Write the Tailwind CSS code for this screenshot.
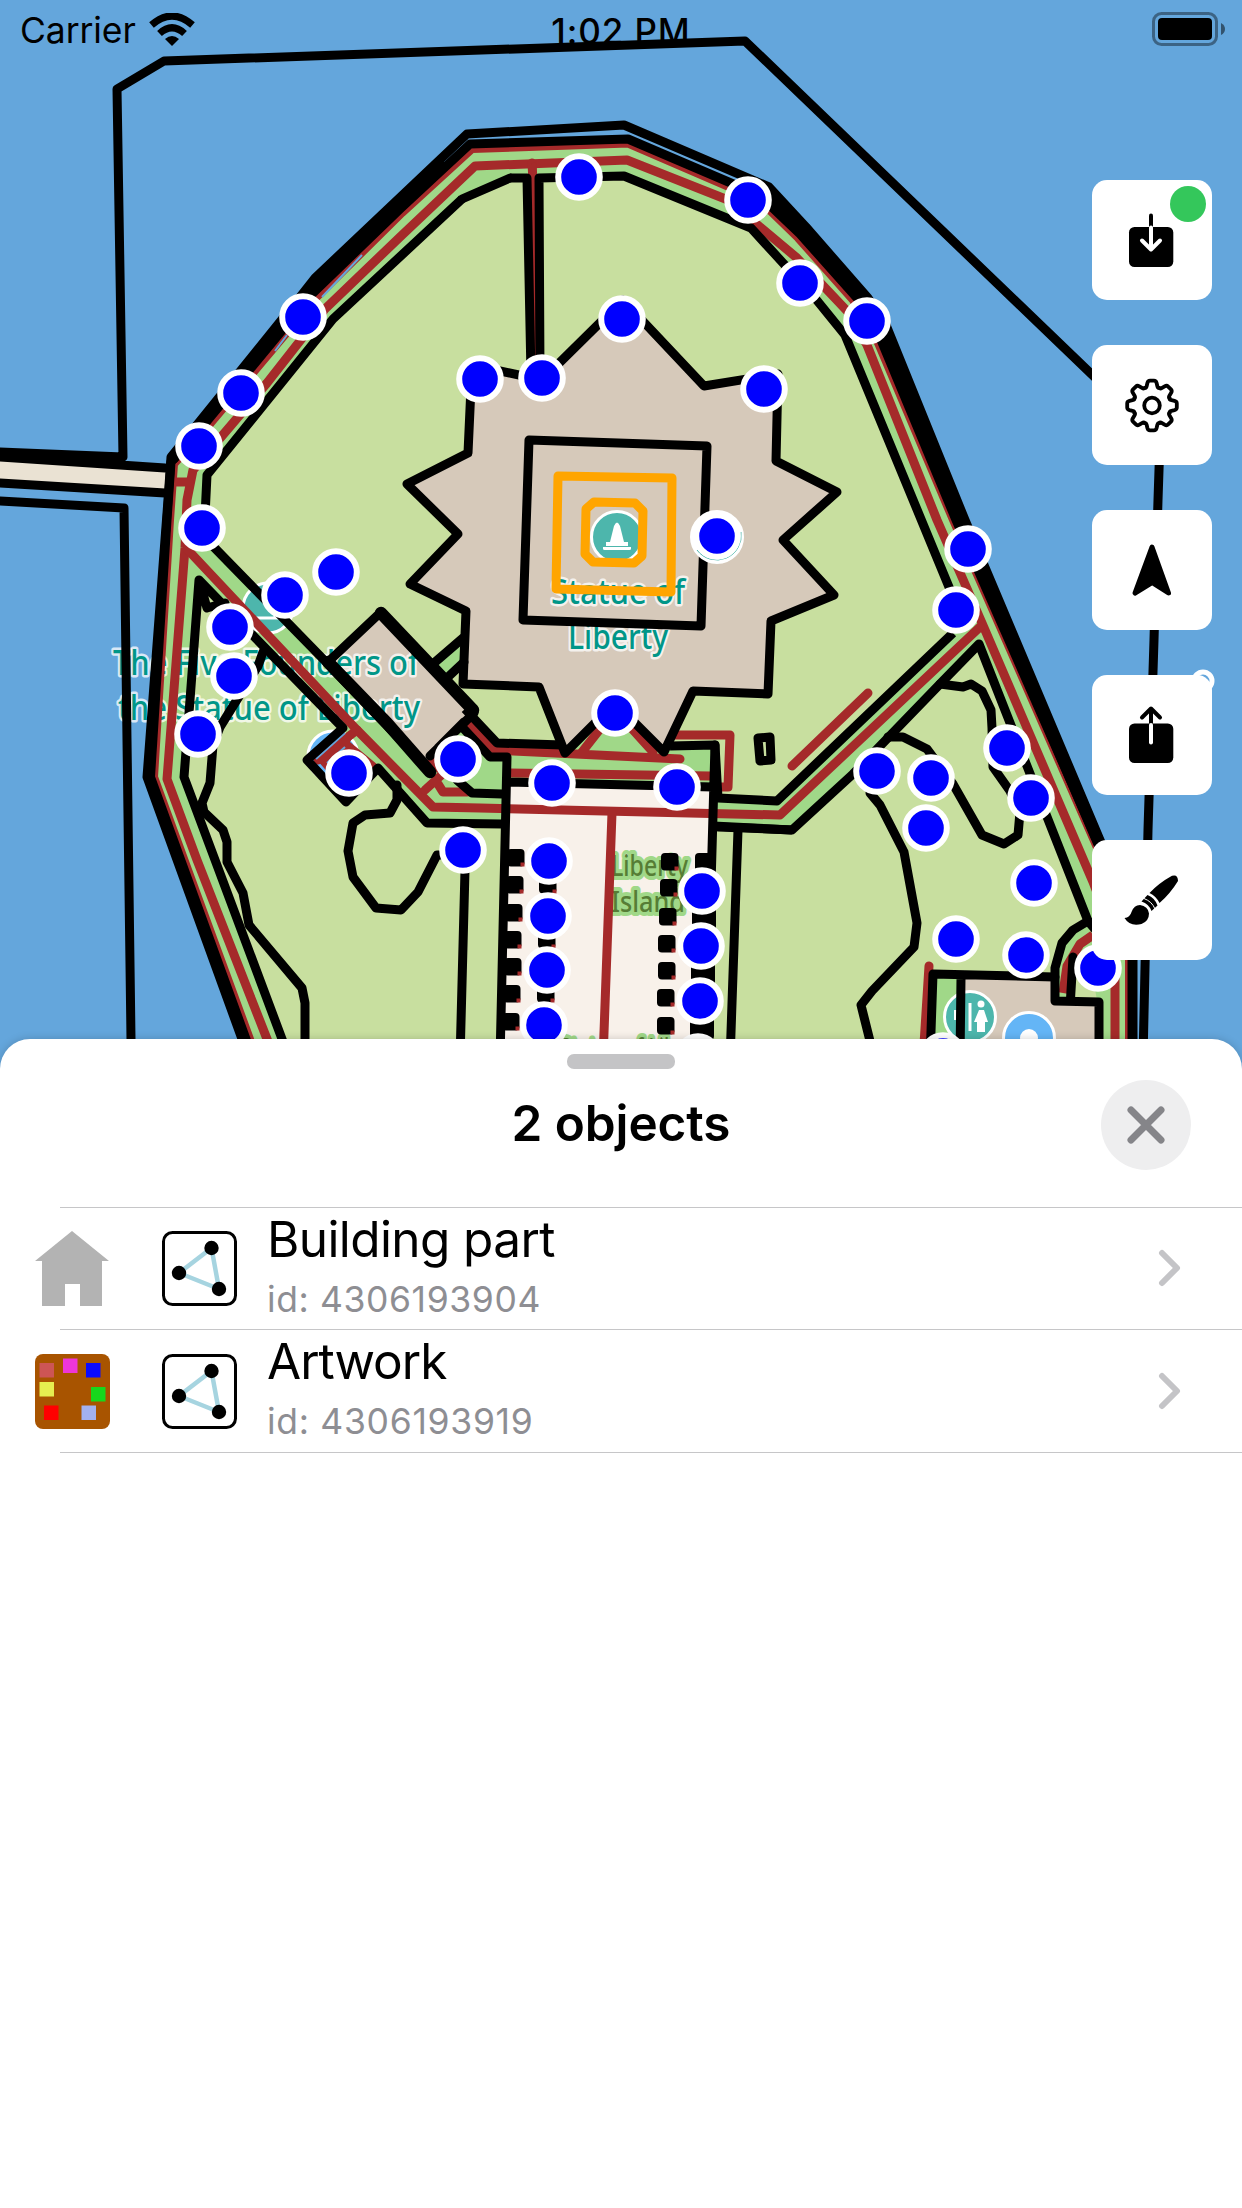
<!DOCTYPE html>
<html lang="en">
<head>
<meta charset="utf-8">
<title>Map</title>
<script src="https://cdn.jsdelivr.net/npm/@tailwindcss/browser@4"></script>
</head>
<body class="bg-white">
<main class="relative flex h-[2208px] w-[1242px] flex-col overflow-hidden bg-white font-['Inter',sans-serif] text-black">
  <section class="relative h-[1039px] w-full shrink-0">
    <!-- map canvas -->
    <svg class="absolute left-0 top-0" width="1242" height="1090" viewBox="0 0 1242 1090" fill="none" stroke-linejoin="round">
      <rect width="1242" height="1090" fill="#64a6dc"/>
      <!-- pier -->
      <path d="M0 457L170 468V493L0 483Z" fill="#eae2d3"/>
      <!-- island base (paths) -->
      <path d="M470 144L628 139L760 196L800 234L857 298L882 340L956 520L1100 850L1133 930V1090H263L245 1039L150 777L167 520L171 462L208 420L313 293L400 209Z" fill="#a0d888"/>
      <!-- lawns -->
      <g fill="#c8df9f">
        <path d="M510 178H527L532 378L540 362L539 178L624 176L751 228L815 298L845 335L956 604L953 633L777 801L718 798L715 745L500 743L465 708L433 774L327 663L204 537L207 475L333 319L462 199Z"/>
        <path d="M199 580L345 728L307 760L346 804L378 768L427 823L502 824L498 1090H301L282 1039L184 777L190 700Z"/>
        <path d="M979 644L1088 921L1073 930L1062 943L1055 968V1001L1099 1002V1090H722L730 1039L738 828L792 830L853 774L940 684Z"/>
      </g>
      <path d="M713 828L738 828L730 1090H706Z" fill="#c8df9f"/>
      <path d="M713 826L792 830M738 830L729 1090" stroke="#000" stroke-width="9"/>
      <path d="M1073 957L1090 962L1097 1000H1069Z" fill="#c8df9f"/>
      <path d="M567 752L615 705L665 752Z" fill="#a0d888"/>
      <path d="M500 746H713V786H507V790H470L440 775L465 722Z" fill="#a0d888"/>
      <path d="M435 663L462 641V660L447 677Z" fill="#a0d888"/>
      <!-- cafe building and annex -->
      <path d="M965 976H1053V1001H1099V1090H965Z" fill="#d6c9ba"/>
      <path d="M933 975H961V1090H930Z" fill="#a0d888"/>
      <!-- points of interest below the ways -->
      <g stroke="#fff" stroke-width="3">
        <circle cx="268" cy="608" r="25" fill="#4db6ac"/>
        <circle cx="333" cy="756" r="25" fill="#64b5f6"/>
        <circle cx="970" cy="1017" r="25.5" fill="#4db6ac"/>
        <circle cx="1029" cy="1038" r="25.5" fill="#64b5f6"/>
      </g>
      <path d="M256 618H284M275 612V618" stroke="#fff" stroke-width="3"/>
      <circle cx="1029" cy="1038" r="9" fill="#fff"/>
      <path d="M970 1003V1031" stroke="#fff" stroke-width="3"/>
      <circle cx="981" cy="1004" r="3.5" fill="#fff"/>
      <path d="M979 1010H984L988 1022H985V1032H977V1022H974ZM954 1010H960V1020H954Z" fill="#fff"/>
      <!-- promenade paving -->
      <path d="M507 782L713 787L707 1090H500Z" fill="#f8f1ea"/>
      <!-- fort and museum -->
      <path d="M468 453L407 484L458 534L410 584L466 611L463 684L539 687L565 753L615 703L664 752L693 691L768 694L771 621L834 595L783 540L837 492L776 461L778 374L704 386L623 300L542 380L472 365Z" fill="#d6c9ba"/>
      <path d="M381 613L329 663L428 765L474 711Z" fill="#d6c9ba"/>
      <circle cx="617" cy="537" r="25.5" fill="#4db6ac" stroke="#fff" stroke-width="3"/>
      <path d="M603 546H628V542H624L620 526Q617 519 614 526L610 542H606V546ZM603 547H631V549H603Z" fill="#fff"/>
      <path d="M604.500 548.500H629.500" stroke="#fff" stroke-width="3" stroke-linecap="round"/>
      <!-- map labels -->
      <g font-family="'Noto Sans','Open Sans',sans-serif" font-weight="500" stroke-linejoin="round" style="paint-order:stroke">
        <g fill="#009688" stroke="#fff" stroke-opacity=".75" stroke-width="5" font-size="35">
          <text x="551" y="604" textLength="134" lengthAdjust="spacingAndGlyphs">Statue of</text>
          <text x="568" y="649" textLength="100" lengthAdjust="spacingAndGlyphs">Liberty</text>
          <text x="113" y="675" textLength="306" lengthAdjust="spacingAndGlyphs">The Five Founders of</text>
          <text x="118" y="720" textLength="302" lengthAdjust="spacingAndGlyphs">the Statue of Liberty</text>
        </g>
        <g fill="#567d35" stroke="#a0d888" stroke-width="8" font-size="29">
          <text x="611" y="875.500" textLength="77" lengthAdjust="spacingAndGlyphs">Liberty</text>
          <text x="611" y="912" textLength="74" lengthAdjust="spacingAndGlyphs">Island</text>
          <text x="560" y="1059" textLength="116" lengthAdjust="spacingAndGlyphs">Statue of Lib</text>
        </g>
      </g>
      <!-- brown footpaths -->
      <g stroke="#a52a2a" stroke-width="9" stroke-linecap="round">
        <path d="M472 149L628 143.500L759 200L798 238L853 300L878 343L953 520L1098 850L1129 930V1090H268L250 1039L154 777L170 520L174 464L211 423L317 297L402 213Z" stroke-width="8"/>
        <path d="M475 166L627 160L728 200L797 258L848 312L867 345L937 520L982 623L1093 882L1115 940V1090M475 166L400 237L325 309L267 383L193 470L187 500L185 548L167 779L197 860L267 1039L286 1090"/>
        <path d="M177 482H189M532 163L534 200M187 549L357 730L433 807L480 808L780 815L980 627M868 693L792 766M929 966L923 1060"/>
        <path d="M534 165L534 365" stroke-width="5"/>
        <path d="M612 813L603 1060M468 723L495 750L680 759M510 773L710 776M673 735H730L728 787H716M582 752L615 710L653 752"/>
        <path d="M425 790L447 770M438 784L443 792L467 792M432 760L438 768M357 730L318 760"/>
        <path d="M1093 935L1080 944L1067 966L1063 993" stroke-linecap="butt"/>
        <path d="M357 728L316 759L346 793L378 765L350 742Z" fill="#a52a2a" stroke="none"/>
      </g>
      <path d="M362 255L322 297M287 335L275 351M345 733L316 759M345 747L327 763" stroke="#64a6dc" stroke-width="2"/>
      <!-- black outlines -->
      <g stroke="#000" stroke-width="9" stroke-linecap="round">
        <path d="M0 452L123 457L117 89L164 61L745 41L1160 440L1158 500L1154 640L1148 830L1143 1060M0 457L165 468M0 483L165 493M0 501L124 508L127 740L131 1039V1060"/>
        <path d="M467 134L624 125L769 187L806 227L868 298L886 325L965 520L1100 840L1133 918V1090H262L242 1039L147 777L168 500L171 457L300 297L315 278Z"/>
        <path d="M470 144L628 139L759 195L800 234L857 298L881 340L956 520L1101 850L1132 930V1090H265L246 1039L150.500 777L167 520L171 462L208 420L313 293L400 209Z"/>
        <path d="M772 199L803 231L862 297L883 332L960.500 520L1099 843M440 166L400 204L313 286L254 359L173 458" stroke-width="12"/>
        <path d="M510 178H527L531 375H540L539 178L624 176L751 228L815 298L845 335L956 604M953 633L777 801L718 798L715 745L670 746M563 745L497 743L465 709M433 774L327 663L204 537L207 475L333 319L462 199" stroke-linecap="butt"/>
        <path d="M510 178L462 199"/>
        <path d="M199 580L343 728L307 760L346 802L378 768L427 823L502 824M301 1090L282 1039L184 777L190 700L199 580L207 608L225 603"/>
        <path d="M979 644L1088 921L1073 930L1062 943L1055 968V1001L1099 1002V1090M979 644L940 684L853 774L792 830L718 827"/>
        <path d="M1088 921L1100 935M1073 957L1070.500 999"/>
        <path d="M940 684L963 687L971 684L982 691L991 710L992 728L993 767L1010 791L1020 812L1018 835L1004 844L982 835L953 784L927 749L903 737L888 737"/>
        <path d="M870 793L880 805L904 852L917 923L914 947L872 991L861 1005L871 1045"/>
        <path d="M263 652L258 666L220 727L213 745L210 783L202 803L204 812L223 830L227 842V862L243 893L249 925L302 988L305 1003V1050"/>
        <path d="M397 785V800L390 813L365 815L353 823L348 851L353 877L376 908L401 910L418 892L437 855H450M465 870L460 1060"/>
        <path d="M434 663L463 638M448 677L464 662M463 728L490 757H507L500 1060M457 780L472 793L502 794M507 782L713 787M715 745L706 1060"/>
        <path d="M468 453L407 484L458 534L410 584L466 611L463 684L539 687L565 753L615 703L664 752L693 691L768 694L771 621L834 595L783 540L837 492L776 461L778 374L704 386L623 300L542 380L472 365Z"/>
        <path d="M529 440L707 446L701 626L523 620Z"/>
        <path d="M381 612L328 662"/>
        <path d="M474 713L430 756M464 722L438 748"/>
        <path d="M328 662L387 723L430 772M381 613L473 710" stroke-width="12.500"/>
        <path d="M758 738L770 737L771 760L760 761Z"/>
        <path d="M930 1060L933 974L1055 977M961 978L960 1060"/>
      </g>
      <!-- benches along the promenade, drawn from the lists below -->
      <g id="benches"></g>
      <path d="M558 476L672 478L671 592L556 589ZM594 502L635 503L643 511L642 556L634 563L593 562L585 554L586 509Z" stroke="#ffa500" stroke-width="9"/>
      <circle cx="717" cy="537" r="25.500" fill="#fff" stroke="#fff" stroke-width="3"/>
      <path d="M697 550A24.500 24.500 0 0 0 741 532" stroke="#4db6ac" stroke-width="1"/>
      <circle cx="1203" cy="681" r="9" stroke="#fff" stroke-width="5"/>
      <g id="nodes" fill="#0000ff" stroke="#fff" stroke-width="6"></g>
    </svg>

    <header class="absolute inset-x-0 top-0 h-[58px]">
      <div class="grid h-full grid-cols-3 items-center pl-5 pr-4">
        <div class="flex items-center gap-[13px]">
          <span class="w-[116px] whitespace-nowrap pt-[3px] text-[35.500px] leading-[56px] tracking-[-0.100px]">Carrier</span>
          <svg width="46" height="34" viewBox="0 0 46 34" fill="none" stroke="#000"><path d="M2.500 12Q23-6 43.500 12M10.500 20.500Q23 9 35.500 20.500" stroke-width="7"/><path d="M16 26Q23 20 30 26L23 33Z" fill="#000" stroke="none"/></svg>
        </div>
        <div class="pr-1 pt-[3px] text-center text-[35px] font-medium leading-[56px] tracking-[0.900px]">1:02 PM</div>
        <svg class="justify-self-end" width="74" height="35" viewBox="0 0 74 35"><rect x="1.500" y="1.500" width="63" height="31" rx="8" fill="none" stroke="#000" stroke-opacity=".4" stroke-width="3"/><rect x="6" y="6" width="54" height="22" rx="4" fill="#000"/><path d="M69 11Q73 13 73 17T69 23Z" fill="#000" fill-opacity=".5"/></svg>
      </div>
    </header>

    <nav class="absolute left-[1092px] top-[180px] flex flex-col gap-[45px]">
      <button class="relative size-[120px] rounded-[15px] bg-white">
        <svg width="120" height="120" viewBox="0 0 120 120" fill="none" stroke-width="4" stroke-linecap="round" stroke-linejoin="round"><path d="M59 35.500V50" stroke="#000"/><rect x="37" y="47" width="44.300" height="40" rx="5.500" fill="#000"/><path d="M59 47.500V69M50 60.500L59 69.500L68 60.500" stroke="#fff"/></svg>
        <span class="absolute right-[6px] top-[6px] size-9 rounded-full bg-[#34c75b]"></span>
      </button>
      <button class="size-[120px] rounded-[15px] bg-white">
        <svg width="120" height="120" viewBox="-60 -60.500 120 120" fill="none" stroke="#000" stroke-width="3.800" stroke-linecap="round" stroke-linejoin="round">
          <circle r="7.800"/>
          <path id="tooth" d="M-7.300-17.600Q-5.800-17.400-5.300-19.500L-4.600-22.500Q-4-24.800-2-24.800H2Q4-24.800 4.600-22.500L5.300-19.500Q5.800-17.400 7.300-17.600"/>
          <use href="#tooth" transform="rotate(45)"/><use href="#tooth" transform="rotate(90)"/><use href="#tooth" transform="rotate(135)"/><use href="#tooth" transform="rotate(180)"/><use href="#tooth" transform="rotate(225)"/><use href="#tooth" transform="rotate(270)"/><use href="#tooth" transform="rotate(315)"/>
        </svg>
      </button>
      <button class="size-[120px] rounded-[15px] bg-white">
        <svg width="120" height="120" viewBox="0 0 120 120"><path d="M60 37L76.500 83L60 72.500L43 83Z" stroke="#000" stroke-width="5" stroke-linejoin="round"/></svg>
      </button>
      <button class="size-[120px] rounded-[15px] bg-white">
        <svg width="120" height="120" viewBox="0 0 120 120" fill="none" stroke-width="4" stroke-linecap="round" stroke-linejoin="round"><rect x="37" y="48.500" width="44.300" height="39.500" rx="5.500" fill="#000"/><path d="M59 48V34M50 42.500L59 33.500L68 42.500" stroke="#000"/><path d="M59 50V67.500" stroke="#fff"/></svg>
      </button>
      <button class="size-[120px] rounded-[15px] bg-white">
        <svg width="120" height="120" viewBox="0 0 120 120"><path d="M57.500 53Q67 43 80 35.800Q86 34 86 41Q78 54 67.500 63Q64 56 57.500 53ZM55.500 55Q63 58 65.500 65.500L59.500 71Q57 64 49.500 61.500ZM48 65Q56 66 57 73.500Q57 81 49.500 84Q38 87 32.500 78Q38 77.500 39.500 72Q42 65 48 65Z"/><path d="M52 58.500Q60 61.500 63 69" fill="none" stroke="#fff" stroke-width="1"/></svg>
      </button>
    </nav>
  </section>

  <section class="relative flex flex-1 flex-col rounded-t-[30px] bg-white shadow-[0_0_8px_rgba(0,0,0,0.18)]">
    <div class="mx-auto mt-[15px] h-[15px] w-[108px] rounded-[7px] bg-[#c4c4c6]"></div>
    <div class="mt-[11px] grid h-[90px] grid-cols-[1fr_auto_1fr] items-center pl-[51px] pr-[51px]">
      <span></span>
      <h1 class="pb-[5px] text-[49.500px] font-semibold leading-[60px] tracking-[-0.100px]">2 objects</h1>
      <button class="flex size-[90px] items-center justify-center justify-self-end rounded-full bg-[#eeeeef]">
        <svg width="40" height="40" viewBox="0 0 40 40" stroke="#858589" stroke-width="7" stroke-linecap="round"><path d="M5 5L35 35M35 5L5 35"/></svg>
      </button>
    </div>
    <div class="ml-[60px] mt-[37px] h-px bg-[#c6c6c8]"></div>
    <ul>
      <li>
        <div class="flex h-[121px] items-center pl-[35px] pr-[60px]">
          <svg width="75" height="76" viewBox="0 0 75 76"><path d="M37 0L74 30H67V75H45V53H30V75H7V30H0Z" fill="#b3b3b3"/></svg>
          <svg class="ml-[52px]" width="75" height="75" viewBox="0 0 75 75"><rect x="1.500" y="1.500" width="72" height="72" rx="9" fill="#fff" stroke="#000" stroke-width="3"/><path d="M49.500 17L17 42L57 58Z" fill="none" stroke="#a6d4e0" stroke-width="4.500"/><circle cx="49.500" cy="17" r="7.200"/><circle cx="17" cy="42" r="7.200"/><circle cx="57" cy="58" r="7.200"/></svg>
          <div class="-mt-[4px] ml-[30px] flex-1">
            <p class="text-[49.500px] leading-[60px] tracking-[-0.600px]">Building part</p>
            <p class="mt-[6px] text-[35.500px] leading-[50px] tracking-[0.600px] text-[#8e8e93]">id: 4306193904</p>
          </div>
          <svg class="-mt-[2px]" width="24" height="40" viewBox="0 0 24 40" fill="none" stroke="#c4c4c7" stroke-width="6" stroke-linecap="round" stroke-linejoin="round"><path d="M4 5L19 20L4 35"/></svg>
        </div>
        <div class="ml-[60px] h-px bg-[#c6c6c8]"></div>
      </li>
      <li>
        <div class="flex h-[122px] items-center pl-[35px] pr-[60px]">
          <svg width="75" height="75" viewBox="0 0 75 75"><rect width="75" height="75" rx="8" fill="#a85400"/><path d="M4.500 9H19v14.500H4.500Z" fill="#cd5555"/><path d="M28 4.500h14.500V19H28Z" fill="#ee36d8"/><path d="M51 9h14.500v14.500H51Z" fill="#0a0aff"/><path d="M4.500 28H19v14.500H4.500Z" fill="#e6ee50"/><path d="M56 33h14.500v14.500H56Z" fill="#16d81c"/><path d="M9 51.500h14.500V66H9Z" fill="#f00"/><path d="M46.500 51.500H61V66H46.500Z" fill="#a3b1ef"/></svg>
          <svg class="ml-[52px]" width="75" height="75" viewBox="0 0 75 75"><rect x="1.500" y="1.500" width="72" height="72" rx="9" fill="#fff" stroke="#000" stroke-width="3"/><path d="M49.500 17L17 42L57 58Z" fill="none" stroke="#a6d4e0" stroke-width="4.500"/><circle cx="49.500" cy="17" r="7.200"/><circle cx="17" cy="42" r="7.200"/><circle cx="57" cy="58" r="7.200"/></svg>
          <div class="-mt-[4px] ml-[30px] flex-1">
            <p class="text-[49.500px] leading-[60px] tracking-[-1px]">Artwork</p>
            <p class="mt-[6px] text-[35.500px] leading-[50px] tracking-[0.700px] text-[#8e8e93]">id: 4306193919</p>
          </div>
          <svg width="24" height="40" viewBox="0 0 24 40" fill="none" stroke="#c4c4c7" stroke-width="6" stroke-linecap="round" stroke-linejoin="round"><path d="M4 5L19 20L4 35"/></svg>
        </div>
        <div class="ml-[60px] h-px bg-[#c6c6c8]"></div>
      </li>
    </ul>
  </section>
</main>
<script>
  const NS = 'http://www.w3.org/2000/svg';
  const add = (parent, tag, attrs) => {
    const el = document.createElementNS(NS, tag);
    for (const k in attrs) el.setAttribute(k, attrs[k]);
    parent.appendChild(el);
  };
  const nodes = [[579,177],[748,200],[800,283],[867,321],[303,317],[241,393],[199,446],[202,528],[622,319],[480,379],[542,378],[764,389],[717,536],[968,549],[956,610],[336,572],[285,595],[230,627],[234,676],[198,734],[349,773],[458,759],[615,713],[552,783],[677,787],[877,771],[931,778],[1007,748],[1031,798],[926,828],[1034,883],[956,939],[1026,955],[1098,968],[463,850],[549,861],[548,916],[547,970],[544,1025],[702,891],[701,946],[700,1001],[698,1057],[943,1056]];
  const nodeLayer = document.getElementById('nodes');
  nodes.forEach(([cx, cy]) => add(nodeLayer, 'circle', { cx, cy, r: 20.8 }));
  const benches = [
    [507,849],[506,876],[505,904],[504,931],[504,958],[503,985],[502,1013],
    [661,853],[660,879],[659,908],[658,935],[658,962],[657,989],[657,1017],
    [539,876],[538,931],[537,985]
  ];
  const benchLayer = document.getElementById('benches');
  benches.forEach(([x, y]) => {
    add(benchLayer, 'rect', { x, y, width: 17.5, height: 17.5, rx: 4, fill: '#000' });
    add(benchLayer, 'rect', { x: x + 13.5, y: y + 13.5, width: 4, height: 4, fill: '#a52a2a' });
  });
  [[695,853,18],[692,906,24],[691,961,24],[690,1016,24]].forEach(([x, y, width]) =>
    add(benchLayer, 'rect', { x, y, width, height: 24, rx: 4, fill: '#000' }));
</script>
</body>
</html>
